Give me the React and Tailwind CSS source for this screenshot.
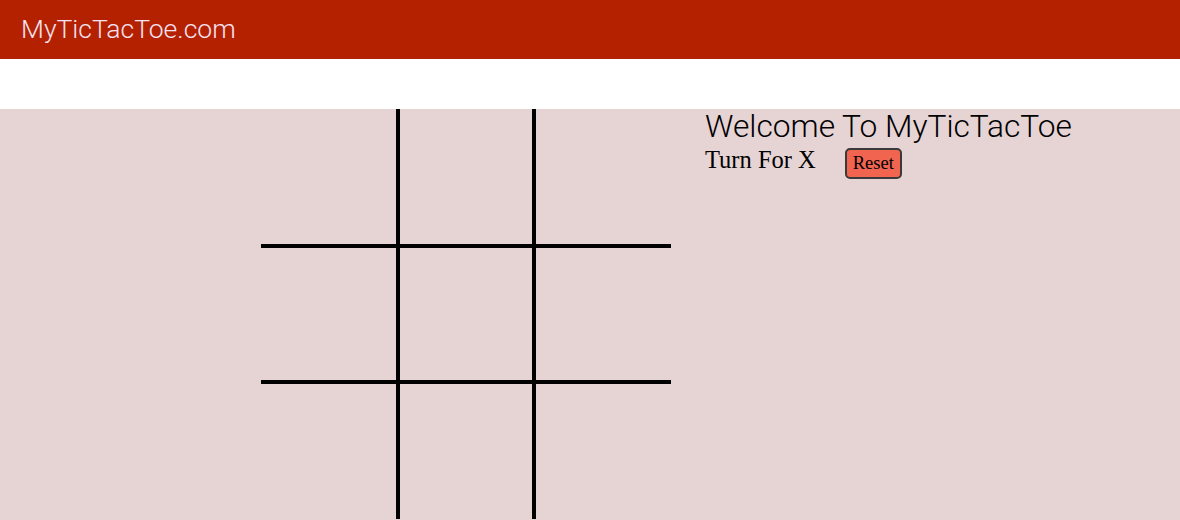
const cells = [0, 1, 2, 3, 4, 5, 6, 7, 8];

function Square({ index }) {
  const col = index % 3;
  const row = Math.floor(index / 3);
  return (
    <div
      className={
        (col === 1 ? 'border-x-4 border-black ' : '') +
        (row === 1 ? 'border-y-4 border-black ' : '') +
        'flex items-center justify-center'
      }
    />
  );
}

export default function App() {
  return (
    <div className="min-h-[520px] bg-white" style={{ fontFamily: 'Roboto, sans-serif' }}>
      <header className="h-[59px] bg-[#b32100] flex items-center pl-[21px]">
        <span className="text-[26.5px] font-light text-[#f6e2f2] leading-none">MyTicTacToe.com</span>
      </header>
      <div className="h-[50px]" />
      <main className="bg-[#e6d3d4] flex pl-[261px] h-[411px] overflow-hidden">
        <div className="grid grid-cols-[135px_140px_135px] grid-rows-[135px_140px_135px] shrink-0">
          {cells.map((i) => (
            <Square key={i} index={i} />
          ))}
        </div>
        <div className="ml-[34px]">
          <h1 className="text-[31.7px] font-light leading-[36px] text-black">Welcome To MyTicTacToe</h1>
          <div className="flex items-start" style={{ fontFamily: '"Liberation Serif", serif' }}>
            <span className="mt-[1px] text-[24.5px] leading-[28px] text-black">Turn For X</span>
            <button className="ml-[29px] mt-[3px] h-[31px] px-[6px] bg-[#f06450] border-2 border-[#3a3a3a] rounded-[5px] text-[18.5px] leading-none text-black">
              Reset
            </button>
          </div>
        </div>
      </main>
    </div>
  );
}
